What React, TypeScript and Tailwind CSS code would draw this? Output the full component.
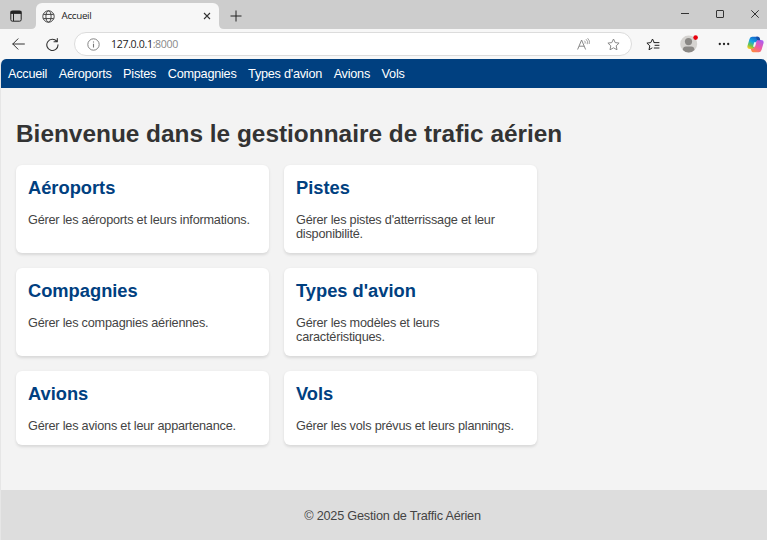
import React from "react";

const NAV = ["Accueil", "Aéroports", "Pistes", "Compagnies", "Types d'avion", "Avions", "Vols"];

const CARDS = [
  { title: "Aéroports", text: "Gérer les aéroports et leurs informations." },
  { title: "Pistes", text: "Gérer les pistes d'atterrissage et leur disponibilité." },
  { title: "Compagnies", text: "Gérer les compagnies aériennes." },
  { title: "Types d'avion", text: "Gérer les modèles et leurs caractéristiques." },
  { title: "Avions", text: "Gérer les avions et leur appartenance." },
  { title: "Vols", text: "Gérer les vols prévus et leurs plannings." },
];

function TabStrip() {
  return (
    <div className="flex h-[29px] bg-[#cdcdcd]">
      <div className="flex w-9 items-center pt-[3px] pl-2.5">
        <svg width="12" height="12" viewBox="0 0 12 12" fill="none" stroke="#222">
          <rect x="0.8" y="1" width="10.4" height="10.2" rx="1.6" />
          <path d="M0.6 2.4H11.4" strokeWidth="3" />
          <path d="M3.5 3V11" />
        </svg>
      </div>
      <div className="relative flex w-[183px] items-center rounded-t-[6px] bg-[#f7f7f7] mt-[3px]">
        <svg className="absolute -left-[5px] bottom-0" width="5" height="5"><path d="M5 0V5H0Q5 5 5 0" fill="#f7f7f7" /></svg>
        <svg className="absolute -right-[5px] bottom-0" width="5" height="5"><path d="M0 0V5H5Q0 5 0 0" fill="#f7f7f7" /></svg>
        <svg className="ml-[5.5px]" width="13" height="13" viewBox="0 0 13 13" fill="none" stroke="#444">
          <circle cx="6.5" cy="6.5" r="5.7" />
          <ellipse cx="6.5" cy="6.5" rx="2.6" ry="5.7" />
          <path d="M1.3 4.4H11.7M1.3 8.6H11.7" />
        </svg>
        <span className="ml-[7px] pt-px text-[9.8px] tracking-[-0.3px] text-[#222]">Accueil</span>
        <svg className="ml-auto mr-2" width="8" height="8" viewBox="0 0 8 8" stroke="#333" strokeWidth="1.1"><path d="M1 1L7 7M7 1L1 7" /></svg>
      </div>
      <svg className="ml-[10.5px] mt-2.5" width="12" height="12" viewBox="0 0 12 12" stroke="#222"><path d="M6 .5V11.5M.5 6H11.5" /></svg>
      <div className="ml-auto flex items-center gap-[27px] pr-2 pb-px">
        <svg width="8" height="8" stroke="#333"><path d="M0 3.5H8" /></svg>
        <svg width="8" height="8" fill="none" stroke="#333"><rect x=".5" y=".5" width="7" height="7" rx=".5" /></svg>
        <svg width="8" height="8" stroke="#333"><path d="M.3 .3L7.7 7.7M7.7 .3L.3 7.7" /></svg>
      </div>
    </div>
  );
}

const STAR = "M6.5 1L8.2 4.6L12.1 5.1L9.2 7.8L10 11.8L6.5 9.8L3 11.8L3.8 7.8L.9 5.1L4.8 4.6Z";

function Toolbar() {
  return (
    <div className="flex h-[30px] items-center bg-[#f7f7f7]">
      <svg className="ml-3" width="13" height="12" viewBox="0 0 13 12" fill="none" stroke="#333" strokeLinecap="round" strokeLinejoin="round"><path d="M12.4 6H.8M6 .8L.8 6L6 11.2" /></svg>
      <svg className="ml-[21px]" width="13" height="13" viewBox="0 0 13 13" fill="none" stroke="#333" strokeWidth="1.1" strokeLinecap="round" strokeLinejoin="round"><path d="M10.8 3.4A5.6 5.6 0 1 0 12 6.8M11.3 .6V3.8H8" /></svg>
      <div className="ml-[15px] flex h-[24px] w-[558px] items-center rounded-full border border-[#dcdcdc] bg-white">
        <svg className="ml-[12px]" width="13" height="13" viewBox="0 0 13 13" fill="none" stroke="#777" strokeWidth=".9"><circle cx="6.5" cy="6.5" r="5.7" /><path d="M6.5 5.7V9.6M6.5 3.4V4.5" strokeWidth="1.1" /></svg>
        <span className="ml-[11px] pt-px text-[10.6px] tracking-[-0.34px] text-[#222]">127.0.0.1<span className="text-[#888]">:8000</span></span>
        <svg className="ml-auto" width="13" height="13" viewBox="0 0 13 13" fill="none" stroke="#888"><path d="M.6 11.5L4.6 2L8.6 11.5M2 8.2H7.2" /><path d="M7.4 2.7Q8.8 3.8 8 5.6M9 1.2Q11.4 3.2 10.2 6.2M10.6 .2Q13.4 2.8 12.2 6" strokeWidth=".8" /></svg>
        <svg className="mr-[11.5px] ml-[17px]" width="13" height="13" fill="none" stroke="#888" strokeLinejoin="round"><path d={STAR} /></svg>
      </div>
      <svg className="ml-[14px]" width="14" height="13" viewBox="0 0 14 13" fill="none" stroke="#222" strokeLinejoin="round" strokeLinecap="round"><path d="M8.2 4.6L6.5 1L4.8 4.6L.9 5.1L3.8 7.8L3 11.8L6 10M8.2 4.6H13M9 7.3H13M8.2 10H13" /></svg>
      <svg className="ml-5" width="19" height="18" viewBox="0 0 19 18"><circle cx="8.7" cy="9" r="8.5" fill="#d5d3d0" /><circle cx="8.5" cy="6.6" r="3.6" fill="#8a8885" /><path d="M2.8 15Q3 11.6 6 11.6H11.2Q14.2 11.6 14.5 15Q11.9 17.5 8.7 17.5Q5.3 17.5 2.8 15" fill="#8a8885" /><circle cx="15.6" cy="2.6" r="2.3" fill="#e8000d" /></svg>
      <svg className="ml-[19px]" width="12" height="4" fill="#222"><circle cx="1.8" cy="2" r="1.15" /><circle cx="6" cy="2" r="1.15" /><circle cx="10.2" cy="2" r="1.15" /></svg>
      <svg className="ml-[17px]" width="17" height="17" viewBox="0 0 17 17">
        <defs>
          <linearGradient id="cool" x1=".7" y1="0" x2=".2" y2="1"><stop stopColor="#1460c9" /><stop offset=".45" stopColor="#15a5e5" /><stop offset=".75" stopColor="#6cc64c" /><stop offset="1" stopColor="#ffc91d" /></linearGradient>
          <linearGradient id="warm" x1=".8" y1="0" x2=".2" y2="1"><stop stopColor="#a95df2" /><stop offset=".5" stopColor="#ee5aa8" /><stop offset="1" stopColor="#ff8b3d" /></linearGradient>
        </defs>
        <path d="M5.2 .8H11Q12.3 .8 12.8 2.8L13.3 4.5H11.5Q9.8 4.5 9.2 6.5L7.4 12Q7 13 5.5 13H3Q-.2 13 .5 9.7L2.5 3Q3.2 .8 5.2 .8Z" fill="url(#cool)" />
        <path d="M11.8 16.2H6Q4.7 16.2 4.2 14.2L3.7 12.7H5.5Q7.2 12.5 7.8 10.5L9.6 5Q10 4 11.5 4H14Q17.2 4 16.5 7.3L14.5 14Q13.8 16.2 11.8 16.2Z" fill="url(#warm)" />
        <path d="M7.2 6.2H9.2L8 10.8H6Z" fill="#f7f7f7" />
        <path d="M9.2 .8H11Q12.3 .8 12.8 2.8L13.3 4.3H11.4Q10.2 4.2 9.6 3Z" fill="#174ea6" />
      </svg>
    </div>
  );
}

export default function App() {
  return (
    <div className="flex h-[540px] w-[767px] flex-col overflow-hidden bg-[#f7f7f7] font-['Liberation_Sans',Arial,sans-serif]">
      <header className="font-['Open_Sans','Segoe_UI',sans-serif]">
        <TabStrip />
        <Toolbar />
      </header>
      <div className="flex flex-1 flex-col overflow-hidden rounded-t-[6px] border-l border-[#e6e6e6] bg-[#f3f3f3]">
        <nav className="flex h-[29.4px] items-center gap-[11.6px] bg-[#004080] pt-px pl-[7px] text-[12.7px] tracking-[-0.25px] text-white">
          {NAV.map((n) => <a key={n}>{n}</a>)}
        </nav>
        <main className="flex-1 px-[15px] pt-[31.2px]">
          <h1 className="text-[24.4px] leading-7 font-bold whitespace-nowrap text-[#333]">Bienvenue dans le gestionnaire de trafic aérien</h1>
          <div className="mt-[17px] grid w-[521px] grid-cols-2 gap-x-[15px] gap-y-[15.4px]">
            {CARDS.map((c) => (
              <section key={c.title} className="rounded-[6px] bg-white px-3 py-3 shadow-[0_1.5px_3px_rgba(0,0,0,0.11)]">
                <h2 className="text-[18.3px] leading-[21px] font-bold text-[#004080]">{c.title}</h2>
                <p className="mt-[15px] text-[12.7px] leading-[14px] tracking-[-0.21px] text-[#444]">{c.text}</p>
              </section>
            ))}
          </div>
        </main>
        <footer className="flex h-[50.5px] items-center justify-center bg-[#ddd] pt-[3px] pl-[17px] text-[12.7px] tracking-[-0.21px] text-[#444]">© 2025 Gestion de Traffic Aérien</footer>
      </div>
    </div>
  );
}
